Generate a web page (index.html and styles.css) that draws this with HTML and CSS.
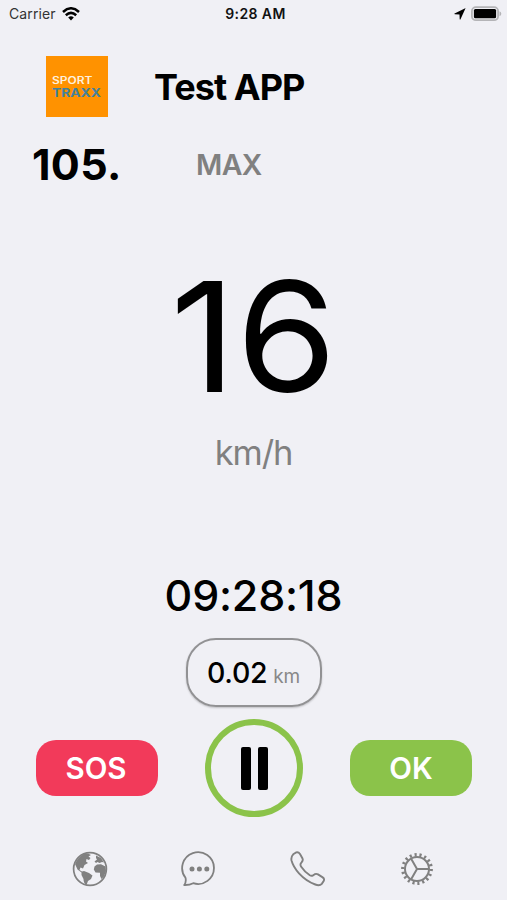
FILE: index.html
```html
<!DOCTYPE html>
<html lang="en">
<head>
<meta charset="utf-8">
<title>Test APP</title>
<link rel="stylesheet" href="styles.css">
</head>
<body>
<div class="status">
  <div class="carrier"><span>Carrier</span>
    <svg width="18" height="14" viewBox="0 0 18 14" fill="none" stroke="#000" stroke-width="2.5"><path d="M1 5Q9-2.4 17 5M3.8 8.2Q9 3.6 14.2 8.2"/><path d="M9 13.4 6.2 10.5Q9 8.2 11.8 10.5Z" fill="#000" stroke="none"/></svg>
  </div>
  <div class="clock">9:28 AM</div>
  <div class="indicators">
    <svg width="12" height="12" viewBox="0 0 12 12"><path d="M11.3.7Q11.8.2 11.2.3L.6 5.4Q-.1 6 .8 6.3L5.5 6.5 5.7 11.2Q6 12 6.5 11.3Z"/></svg>
    <svg width="31" height="16" viewBox="0 0 31 16"><rect x=".9" y="1.2" width="26.2" height="13" rx="4" fill="#f0f0f5" stroke="#b4b4b7" stroke-width="1.8"/><rect x="2.9" y="3.1" width="22.2" height="9.2" rx="1.5"/><path d="M28.5 5.2Q30.3 6 30.3 7.7T28.5 10.2Z" fill="#b4b4b7"/></svg>
  </div>
</div>
<header class="header">
  <div class="logo"><span class="sport">SPORT</span><span class="traxx">TRAXX</span></div>
  <h1 class="title">Test APP</h1>
</header>
<div class="limit"><span class="number">105.</span><span class="max">MAX</span></div>
<main class="speed">
  <div class="value">16</div>
  <div class="unit">km/h</div>
</main>
<div class="time">09:28:18</div>
<div class="distance"><span class="dist-value">0.02</span><span class="dist-unit">km</span></div>
<div class="actions">
  <button class="btn sos">SOS</button>
  <button class="pause" aria-label="Pause"><i></i><i></i></button>
  <button class="btn ok">OK</button>
</div>
<nav class="tabs">
  <svg viewBox="0 0 36 36"><circle cx="18" cy="18" r="16.4" fill="none" stroke="#808080" stroke-width="1.7"/><path fill="#808080" d="M3 13Q6 6 12 3L16 2.5 19 4 16.5 5.5 18.5 7 17 9 14.5 8 14 10.5 16 12 12.5 14 11 17.5 8.5 16.5 7.5 19 10 20.5 12 20 17 22 20.5 24.5 19 28 16 30 14.5 34Q11.5 32.5 11.5 28L9.5 24 9.5 21.5 5.5 18.5ZM24 4.5 29 7 32 11.5 30 11 27.5 12 25.5 11 24 12 22.5 10.5 25 8.5 24 7ZM25 13.5 29 13.2 33.5 15.5 34 20 32 25.5 29.5 28 28 25 28 21.8 23.5 21.5 21.8 18.5 22.5 15.5Z"/></svg>
  <svg viewBox="0 0 36 36"><path d="M3.2 34Q5.5 31 4.5 26.8A15.9 15.9 0 1 1 12.2 32.2Q8.5 34.2 3.2 34Z" fill="none" stroke="#808080" stroke-width="1.8" stroke-linejoin="round"/><g fill="#808080"><circle cx="11" cy="18" r="2.5"/><circle cx="18.4" cy="18" r="2.5"/><circle cx="25.8" cy="18" r="2.5"/></g></svg>
  <svg viewBox="0 0 36 36"><path d="M3.2 3.3 6.2 1.4Q8.5.8 10 3L12.5 7.5Q13.3 9.4 11.8 11L10.8 12.4Q10 14 11.2 15.8Q14.5 20.8 19.8 24.3Q21.5 25.3 23 24.4L24.8 23.2Q26.4 22.4 28 23.4L32.7 26.4Q34.7 27.8 33.8 29.8L31.8 32.8Q29.6 35.2 25.3 33.5Q16 30 9 22.3Q3.3 16 1.5 9.5Q.8 5.8 3.2 3.3Z" fill="none" stroke="#808080" stroke-width="1.9"/></svg>
  <svg viewBox="0 0 36 36" fill="none" stroke="#808080"><circle cx="18" cy="18" r="12" stroke-width="2"/><circle cx="18" cy="18" r="14.2" stroke-width="3.4" pathLength="180" stroke-dasharray="4.3 5.7"/><path d="M12 7.6 18 18 12 28.4M18 18H30" stroke-width="2"/></svg>
</nav>
</body>
</html>
```
FILE: styles.css
```css
* { box-sizing: border-box; }
body {
  margin: 0;
  width: 507px;
  height: 900px;
  overflow: hidden;
  background: #f0f0f5;
  color: #000;
  font-family: Inter, "Liberation Sans", sans-serif;
}
.status {
  display: grid;
  grid-template-columns: 1fr auto 1fr;
  align-items: center;
  height: 27px;
  padding: 0 5px 0 9px;
  font-size: 14px;
}
.carrier { display: flex; align-items: center; gap: 6px; color: #333; letter-spacing: .1px; }
.clock { font-weight: 600; color: #111; letter-spacing: .4px; }
.indicators { display: flex; align-items: center; justify-content: flex-end; gap: 5px; }
.header { display: flex; align-items: center; height: 61px; margin-top: 29px; padding-left: 46px; }
.logo {
  display: flex;
  flex-direction: column;
  justify-content: center;
  width: 62px;
  height: 61px;
  padding-left: 6px;
  background: #ff9200;
  line-height: 12px;
}
.sport, .traxx { transform-origin: left; }
.sport { color: #fff0dc; font-size: 9.8px; font-weight: 600; transform: scaleX(1.22); }
.traxx { color: #44819c; font-size: 11.6px; font-weight: 700; transform: scaleX(1.19); }
.title { margin: 0 0 0 46px; font-size: 36px; font-weight: 700; line-height: 44px; letter-spacing: -.95px; }
.limit { display: flex; align-items: center; height: 50px; margin-top: 22px; padding-left: 32px; }
.number { width: 164px; font-size: 43px; font-weight: 700; letter-spacing: .3px; }
.max { font-size: 28.5px; font-weight: 600; color: #808080; letter-spacing: -.6px; }
.speed { display: flex; flex-direction: column; align-items: center; margin-top: 68px; }
.value { height: 160px; line-height: 160px; font-size: 153px; transform: scaleX(1.06); }
.unit { height: 42px; margin-top: 15px; line-height: 42px; font-size: 34.5px; color: #808080; letter-spacing: -1.1px; }
.time { height: 50px; margin-top: 96px; line-height: 50px; text-align: center; font-size: 43px; font-weight: 500; letter-spacing: -.2px; }
.distance {
  display: flex;
  align-items: baseline;
  justify-content: center;
  gap: 6px;
  width: 136px;
  height: 69px;
  margin: 18px auto 0;
  border: 2px solid #929294;
  border-radius: 30px;
  line-height: 65px;
  box-shadow: 0 1px 2px #0003;
}
.dist-value { font-size: 28.5px; font-weight: 500; letter-spacing: -.3px; }
.dist-unit { font-size: 19px; color: #888; letter-spacing: -.2px; }
.actions { display: flex; align-items: center; justify-content: space-between; height: 98px; margin-top: 12px; padding: 0 35px 0 36px; }
button { border: 0; padding: 0; font-family: inherit; }
.btn { width: 122px; height: 56px; border-radius: 20px; color: #fff; font-size: 29.5px; font-weight: 600; }
.sos { background: #f23a5a; padding-right: 2px; }
.ok { background: #8bc34a; }
.pause { display: flex; align-items: center; justify-content: center; gap: 7px; width: 98px; height: 98px; border: 6px solid #8bc34a; border-radius: 50%; background: none; }
.pause i { width: 10px; height: 43px; border-radius: 2px; background: #000; }
.tabs { display: flex; gap: 73px; margin-top: 34px; padding-left: 72px; }
.tabs svg { width: 36px; height: 36px; }
```
